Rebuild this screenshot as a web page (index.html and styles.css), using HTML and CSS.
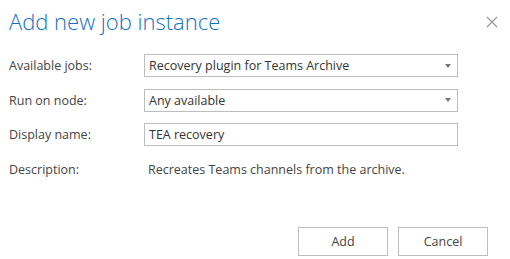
FILE: index.html
```html
<!doctype html>
<html lang="en">
<head>
  <meta charset="UTF-8">
  <title>Add new job instance</title>
  <link rel="stylesheet" href="styles.css">
</head>
<body>
  <div class="dialog">
    <header class="dialog-header">
      <h1>Add new job instance</h1>
      <button class="close" aria-label="close">
        <svg viewBox="0 0 12 12" width="12" height="12"><path d="M1,1 L11,11 M11,1 L1,11" stroke="#9a9a9a" stroke-width="1.3" fill="none"/></svg>
      </button>
    </header>

    <form class="job-form">
      <label>Available jobs:</label>
      <div class="field select">
        <span>Recovery plugin for Teams Archive</span>
        <i class="arrow"></i>
      </div>

      <label>Run on node:</label>
      <div class="field select">
        <span>Any available</span>
        <i class="arrow"></i>
      </div>

      <label>Display name:</label>
      <div class="field">
        <span>TEA recovery</span>
      </div>

      <label>Description:</label>
      <div class="desc">Recreates Teams channels from the archive.</div>
    </form>

    <footer class="dialog-buttons">
      <button class="btn">Add</button>
      <button class="btn">Cancel</button>
    </footer>
  </div>
</body>
</html>
```

FILE: styles.css
```css
* {
  box-sizing: border-box;
  margin: 0;
  padding: 0;
}

body {
  font-family: "Open Sans", "Noto Sans", sans-serif;
  font-size: 12.5px;
  color: #444;
  background: white;
}

.dialog {
  width: 510px;
  height: 259px;
  padding: 0 12px 0 9px;
  display: flex;
  flex-direction: column;
}

.dialog-header {
  display: flex;
  justify-content: space-between;
  align-items: center;
  height: 42px;
}

  .dialog-header h1 {
    font-size: 22px;
    font-weight: 300;
    color: #0f72c4;
    letter-spacing: 0;
  }

  .dialog-header .close {
    border: none;
    background: none;
    width: 12px;
    height: 12px;
    margin-top: 1px;
    display: flex;
  }

.job-form {
  display: grid;
  grid-template-columns: 135px 314px;
  grid-auto-rows: 23px;
  row-gap: 11.5px;
  align-items: center;
  margin-top: 12px;
}

.field {
  height: 23px;
  border: 1px solid #bdbdbd;
  padding: 0 4px;
  display: flex;
  align-items: center;
  justify-content: space-between;
  color: #333;
}

.select .arrow {
  width: 0;
  height: 0;
  border-left: 3.5px solid transparent;
  border-right: 3.5px solid transparent;
  border-top: 4px solid #777;
  margin-right: 2px;
}

.desc {
  padding-left: 4px;
  color: #444;
}

.dialog-buttons {
  margin-top: auto;
  margin-bottom: 3px;
  margin-right: 10px;
  display: flex;
  justify-content: flex-end;
  gap: 10px;
}

.btn {
  font-family: inherit;
  font-size: 12.5px;
  color: #444;
  width: 90px;
  height: 29px;
  background: white;
  border: 1px solid #bdbdbd;
}
```
